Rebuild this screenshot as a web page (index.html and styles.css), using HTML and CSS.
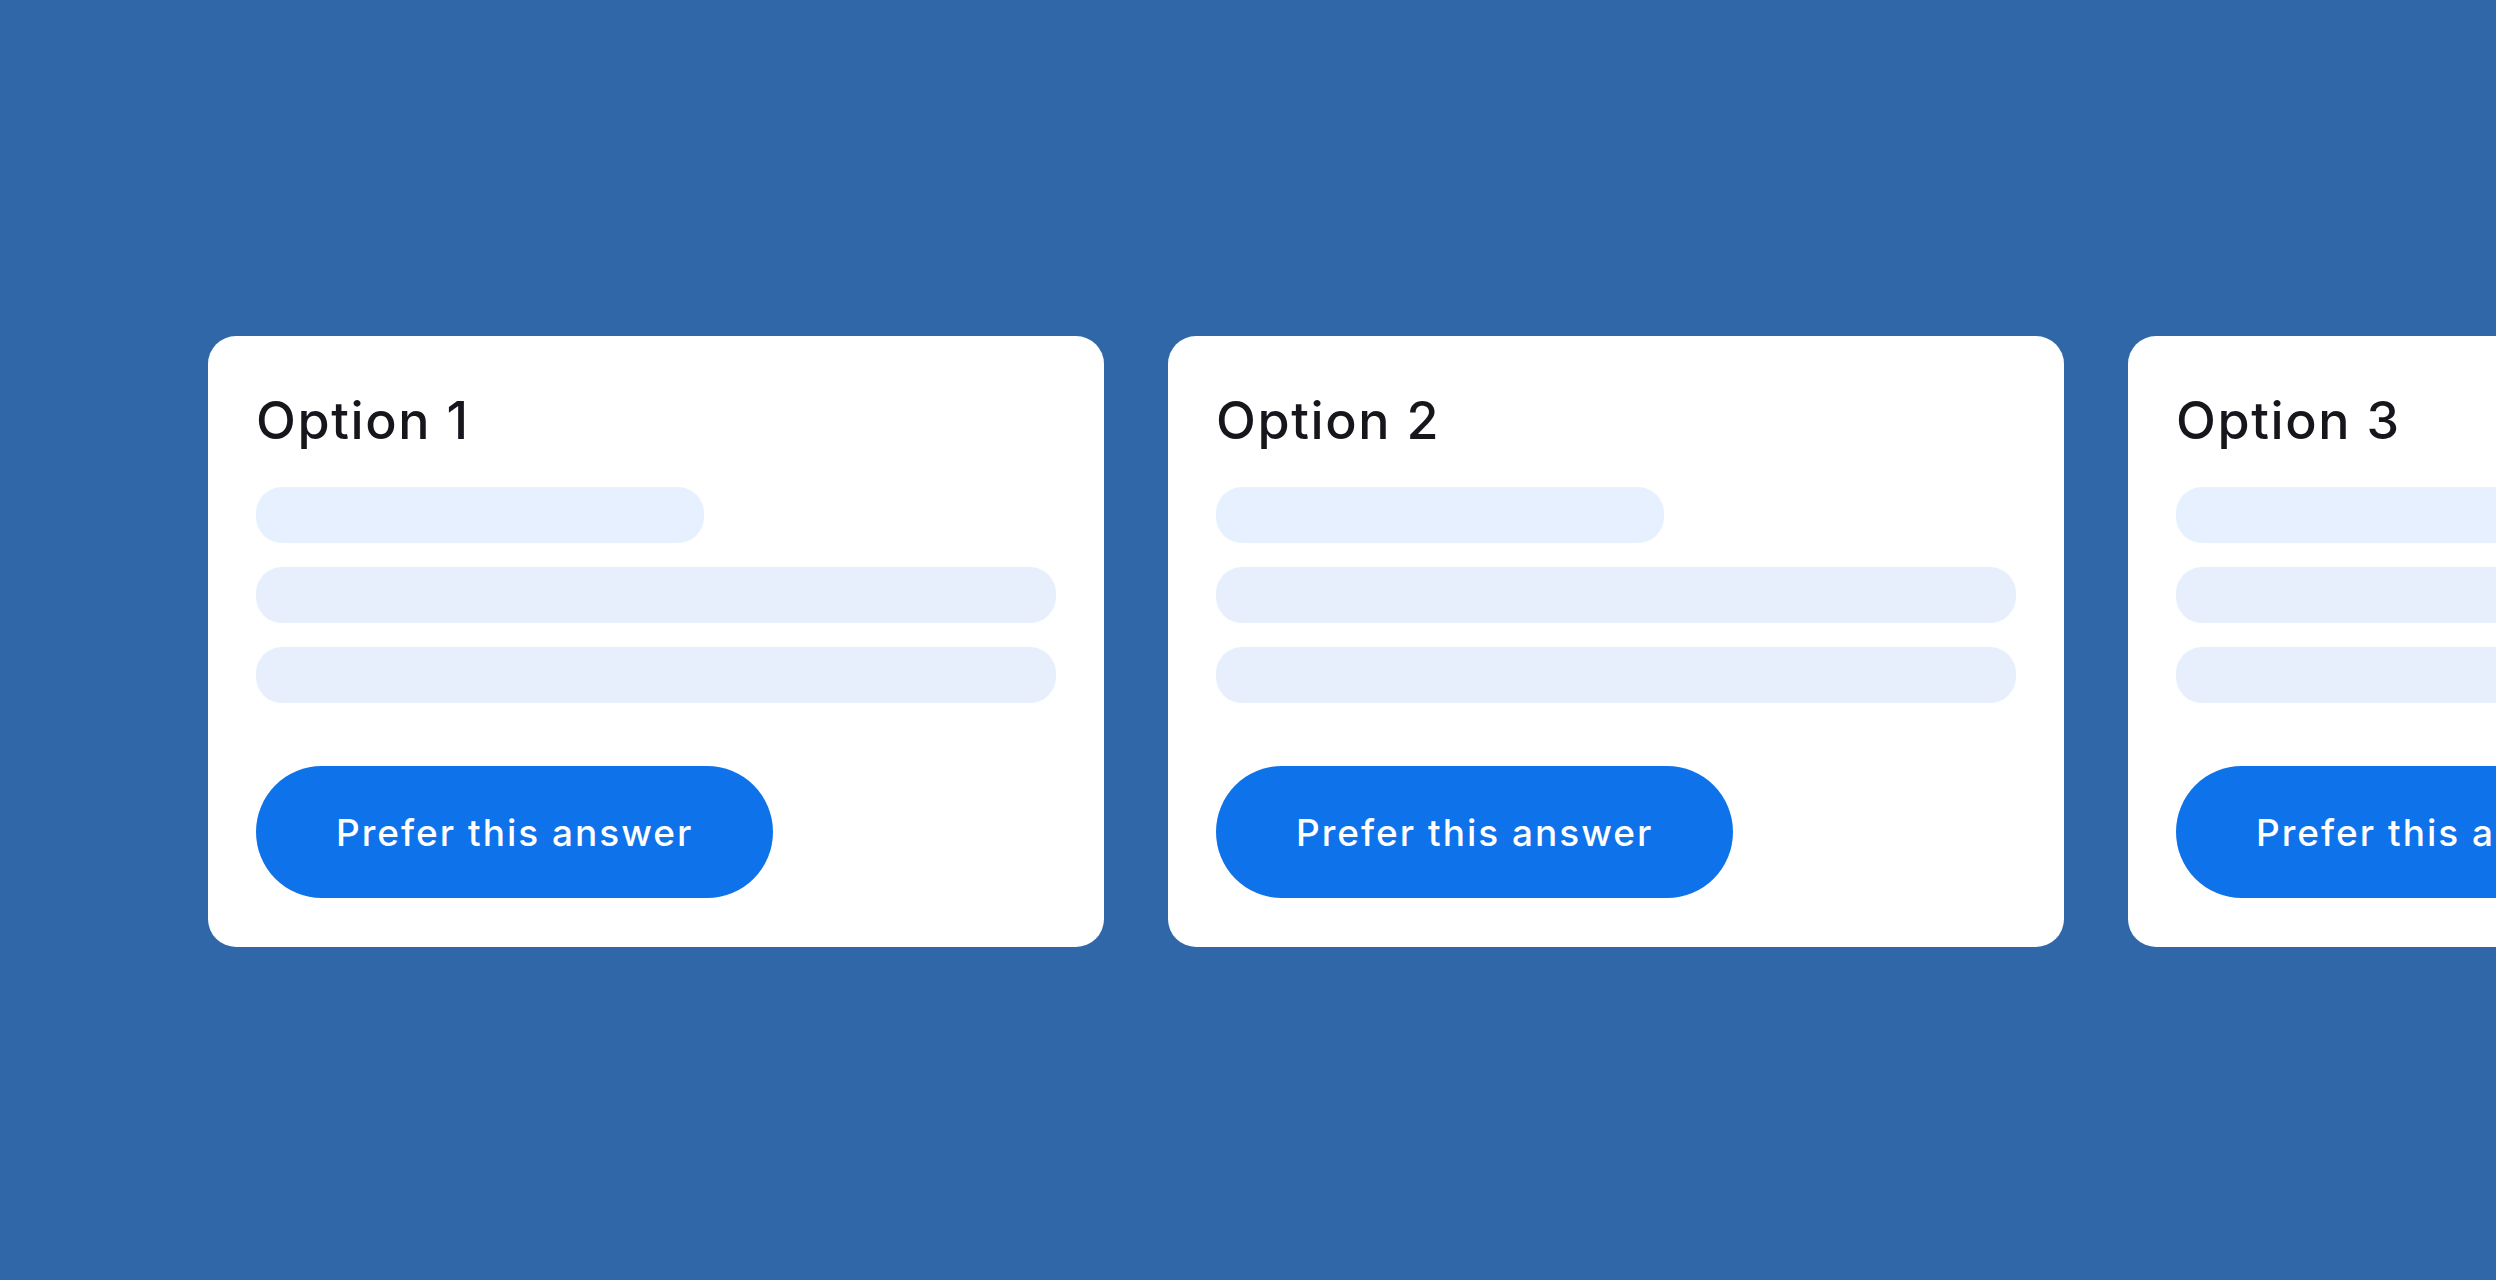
FILE: index.html
```html
<!DOCTYPE html>
<html lang="en">
<head>
<meta charset="utf-8">
<title>Choose a response</title>
<link rel="stylesheet" href="styles.css">
</head>
<body>
<main class="stage">
  <section class="options">
    <article class="option-card">
      <h2 class="option-title">Option 1</h2>
      <div class="skeleton">
        <div class="line line-short"></div>
        <div class="line"></div>
        <div class="line"></div>
      </div>
      <button class="prefer-btn" type="button">Prefer this answer</button>
    </article>
    <article class="option-card">
      <h2 class="option-title">Option 2</h2>
      <div class="skeleton">
        <div class="line line-short"></div>
        <div class="line"></div>
        <div class="line"></div>
      </div>
      <button class="prefer-btn" type="button">Prefer this answer</button>
    </article>
    <article class="option-card">
      <h2 class="option-title">Option 3</h2>
      <div class="skeleton">
        <div class="line line-short"></div>
        <div class="line"></div>
        <div class="line"></div>
      </div>
      <button class="prefer-btn" type="button">Prefer this answer</button>
    </article>
  </section>
</main>
</body>
</html>
```

FILE: styles.css
```css
* {
  box-sizing: border-box;
}

html,
body {
  margin: 0;
  width: 2496px;
  height: 1280px;
  overflow: hidden;
  background: #2f67a9;
  font-family: Inter, "Open Sans", sans-serif;
}

.stage {
  height: 100%;
  padding-top: 336px;
  padding-left: 208px;
}

.options {
  display: flex;
  gap: 64px;
}

.option-card {
  flex: 0 0 896px;
  width: 896px;
  height: 611px;
  background: #ffffff;
  border-radius: 28px;
  padding: 48px;
  display: flex;
  flex-direction: column;
  align-items: flex-start;
}

.option-title {
  margin: 9px 0 38px;
  font-size: 52px;
  line-height: 56px;
  font-weight: 500;
  color: #17161d;
  letter-spacing: 1.6px;
}

.skeleton {
  align-self: stretch;
  display: flex;
  flex-direction: column;
  gap: 24px;
}

.line {
  height: 56px;
  border-radius: 26px;
  background: #e7effc;
}

.line-short {
  width: 448px;
  background: #e6f0fe;
}

.prefer-btn {
  margin-top: 63px;
  height: 132px;
  padding: 0 80px;
  border: 0;
  border-radius: 66px;
  background: #0e72ea;
  color: #ffffff;
  font-family: Inter, "Open Sans", sans-serif;
  font-size: 37px;
  font-weight: 500;
  letter-spacing: 2px;
  white-space: nowrap;
  cursor: pointer;
}
```
